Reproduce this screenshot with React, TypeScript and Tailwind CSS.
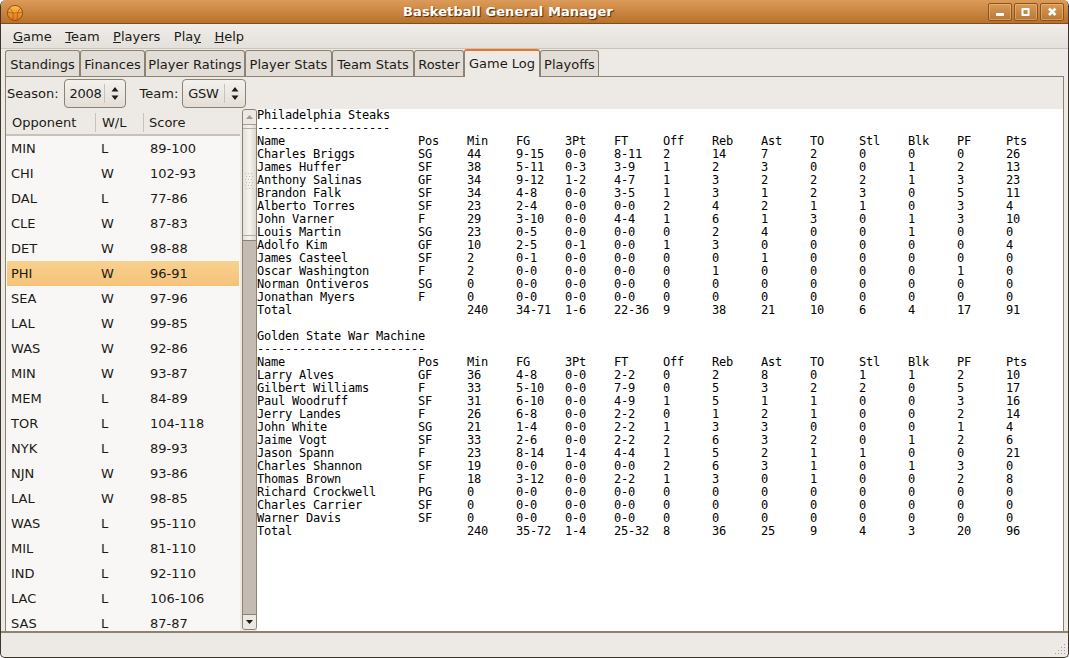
const menus = [
  { pre: "", u: "G", post: "ame" },
  { pre: "", u: "T", post: "eam" },
  { pre: "", u: "P", post: "layers" },
  { pre: "Pla", u: "y", post: "" },
  { pre: "", u: "H", post: "elp" },
];

const tabs = [
  { label: "Standings", w: "w-[75px]" },
  { label: "Finances", w: "w-[65px]" },
  { label: "Player Ratings", w: "w-[100px]" },
  { label: "Player Stats", w: "w-[87px]" },
  { label: "Team Stats", w: "w-[82px]" },
  { label: "Roster", w: "w-[50px]" },
  { label: "Game Log", w: "w-[76px]", active: true },
  { label: "Playoffs", w: "w-[59px]" },
];

const games = [
  ["MIN", "L", "89-100"],
  ["CHI", "W", "102-93"],
  ["DAL", "L", "77-86"],
  ["CLE", "W", "87-83"],
  ["DET", "W", "98-88"],
  ["PHI", "W", "96-91"],
  ["SEA", "W", "97-96"],
  ["LAL", "W", "99-85"],
  ["WAS", "W", "92-86"],
  ["MIN", "W", "93-87"],
  ["MEM", "L", "84-89"],
  ["TOR", "L", "104-118"],
  ["NYK", "L", "89-93"],
  ["NJN", "W", "93-86"],
  ["LAL", "W", "98-85"],
  ["WAS", "L", "95-110"],
  ["MIL", "L", "81-110"],
  ["IND", "L", "92-110"],
  ["LAC", "L", "106-106"],
  ["SAS", "L", "87-87"],
];

const boxHeader = "Name Pos Min FG 3Pt FT Off Reb Ast TO Stl Blk PF Pts";

const phi = [
  "Charles Briggs|SG 44 9-15 0-0 8-11 2 14 7 2 0 0 0 26",
  "James Huffer|SF 38 5-11 0-3 3-9 1 2 3 0 0 1 2 13",
  "Anthony Salinas|GF 34 9-12 1-2 4-7 1 3 2 2 2 1 3 23",
  "Brandon Falk|SF 34 4-8 0-0 3-5 1 3 1 2 3 0 5 11",
  "Alberto Torres|SF 23 2-4 0-0 0-0 2 4 2 1 1 0 3 4",
  "John Varner|F 29 3-10 0-0 4-4 1 6 1 3 0 1 3 10",
  "Louis Martin|SG 23 0-5 0-0 0-0 0 2 4 0 0 1 0 0",
  "Adolfo Kim|GF 10 2-5 0-1 0-0 1 3 0 0 0 0 0 4",
  "James Casteel|SF 2 0-1 0-0 0-0 0 0 1 0 0 0 0 0",
  "Oscar Washington|F 2 0-0 0-0 0-0 0 1 0 0 0 0 1 0",
  "Norman Ontiveros|SG 0 0-0 0-0 0-0 0 0 0 0 0 0 0 0",
  "Jonathan Myers|F 0 0-0 0-0 0-0 0 0 0 0 0 0 0 0",
  "Total| 240 34-71 1-6 22-36 9 38 21 10 6 4 17 91",
];

const gsw = [
  "Larry Alves|GF 36 4-8 0-0 2-2 0 2 8 0 1 1 2 10",
  "Gilbert Williams|F 33 5-10 0-0 7-9 0 5 3 2 2 0 5 17",
  "Paul Woodruff|SF 31 6-10 0-0 4-9 1 5 1 1 0 0 3 16",
  "Jerry Landes|F 26 6-8 0-0 2-2 0 1 2 1 0 0 2 14",
  "John White|SG 21 1-4 0-0 2-2 1 3 3 0 0 0 1 4",
  "Jaime Vogt|SF 33 2-6 0-0 2-2 2 6 3 2 0 1 2 6",
  "Jason Spann|F 23 8-14 1-4 4-4 1 5 2 1 1 0 0 21",
  "Charles Shannon|SF 19 0-0 0-0 0-0 2 6 3 1 0 1 3 0",
  "Thomas Brown|F 18 3-12 0-0 2-2 1 3 0 1 0 0 2 8",
  "Richard Crockwell|PG 0 0-0 0-0 0-0 0 0 0 0 0 0 0 0",
  "Charles Carrier|SF 0 0-0 0-0 0-0 0 0 0 0 0 0 0 0",
  "Warner Davis|SF 0 0-0 0-0 0-0 0 0 0 0 0 0 0 0",
  "Total| 240 35-72 1-4 25-32 8 36 25 9 4 3 20 96",
];

// name column is 23 chars, the rest 7 chars each
function fmtCells(cells: string[]) {
  return cells.map((c, i) => c.padEnd(i === 0 ? 23 : 7)).join("").trimEnd();
}

function fmtRow(row: string) {
  const [name, rest] = row.split("|");
  if (rest.startsWith(" ")) {
    return fmtCells([name, "", ...rest.trim().split(" ")]);
  }
  return fmtCells([name, ...rest.split(" ")]);
}

function boxScore(team: string, rows: string[]) {
  return [team, "-".repeat(team.length), fmtCells(boxHeader.split(" ")), ...rows.map(fmtRow)].join("\n");
}

const report = boxScore("Philadelphia Steaks", phi) + "\n\n" + boxScore("Golden State War Machine", gsw);

function Spinner({ value, w }: { value: string; w: string }) {
  return (
    <div className={`${w} h-[29px] shrink-0 flex items-center rounded-[4px] border border-[#8c8274] bg-gradient-to-b from-[#f4f1ee] to-[#e3ded7] pl-[5px] pr-[6px]`}>
      <span className="flex-1 text-[#1c1a17] tracking-[-0.3px]">{value}</span>
      <span className="w-px h-[19px] shrink-0 bg-[#c9c2b8] mr-[6px]" />
      <svg width="8" height="15" viewBox="0 0 8 15" className="shrink-0">
        <path d="M4 1 L7.5 5.5 H0.5 Z M4 14 L7.5 9.5 H0.5 Z" fill="#1f1d1a" />
      </svg>
    </div>
  );
}

function WinButton({ kind }: { kind: "min" | "max" | "close" }) {
  return (
    <div className="w-[24px] h-[18px] rounded-[2px] border border-[#8d531c] bg-gradient-to-b from-[#d99a58] to-[#bb7733] flex items-center justify-center shadow-[inset_0_0_0_1px_rgba(255,220,170,0.35)]">
      <svg width="14" height="14" viewBox="0 0 14 14">
        {kind === "min" && <rect x="3" y="8" width="8" height="3" fill="#fff" />}
        {kind === "max" && <rect x="3.5" y="4" width="6" height="6" fill="none" stroke="#fff" strokeWidth="2" />}
        {kind === "close" && <path d="M4 3.5 L10.5 10 M10.5 3.5 L4 10" stroke="#fff" strokeWidth="2.6" />}
      </svg>
    </div>
  );
}

function Ball() {
  return (
    <svg width="18" height="18" viewBox="0 0 18 18" className="mt-[2px] shrink-0">
      <defs>
        <linearGradient id="ball" x1="0" y1="0" x2="0" y2="1">
          <stop offset="0" stopColor="#fbc04e" />
          <stop offset="1" stopColor="#e66f14" />
        </linearGradient>
      </defs>
      <circle cx="9" cy="9" r="7.6" fill="url(#ball)" stroke="#8a4f14" strokeWidth="0.9" />
      <path d="M1.6 8 C6 9.5 12 9.5 16.4 8 M3 4 C7 6.5 8 11 6.5 16 M15 4 C12 6 10.5 11 11.5 16" fill="none" stroke="#9c5512" strokeWidth="0.7" />
    </svg>
  );
}

export default function App() {
  return (
    <div className="w-[1069px] h-[658px] overflow-hidden bg-white font-['DejaVu_Sans',sans-serif] text-[13px] text-[#1c1a17]">
      <div className="h-full flex flex-col rounded-t-[6px] rounded-b-[5px] border-x border-b border-[#3c3529] bg-[#edeae5] overflow-hidden">
        {/* Title bar */}
        <div className="h-[24px] shrink-0 flex items-center bg-gradient-to-b from-[#dc9b59] to-[#b97229] border-b border-[#7b4f22] pl-[5px] pr-[4px]">
          <Ball />
          <div className="flex-1 text-center font-bold tracking-[0.1px] text-white [text-shadow:1px_1px_1px_#4a2c0c] pl-[4px]">
            Basketball General Manager
          </div>
          <div className="flex gap-[2px] mt-[1px]">
            <WinButton kind="min" />
            <WinButton kind="max" />
            <WinButton kind="close" />
          </div>
        </div>

        {/* Menu bar */}
        <div className="h-[25px] shrink-0 flex items-center gap-[13.5px] px-[12px] pt-[1px] bg-gradient-to-b from-[#f0edea] to-[#e4e0da] border-b border-[#cdc4b9]">
          {menus.map((m) => (
            <span key={m.u}>
              {m.pre}
              <span className="underline">{m.u}</span>
              {m.post}
            </span>
          ))}
        </div>

        {/* Tabs */}
        <div className="h-[27px] shrink-0 flex items-end pl-[4px] relative z-10">
          {tabs.map((t) =>
            t.active ? (
              <div
                key={t.label}
                className={`${t.w} h-[28px] -mb-px flex items-center justify-center rounded-t-[3px] border-x border-[#8c8274] border-t-2 border-t-[#e8742a] bg-[#edeae5]`}
              >
                {t.label}
              </div>
            ) : (
              <div
                key={t.label}
                className={`${t.w} h-[26px] pt-[2px] flex items-center justify-center rounded-t-[3px] border border-b-0 border-[#8c8274] bg-[#e2ddd6]`}
              >
                {t.label}
              </div>
            ),
          )}
        </div>

        {/* Notebook page */}
        <div className="flex-1 min-h-0 mx-[4px] flex flex-col border border-[#8c8274] border-b-0">
          <div className="h-[32px] shrink-0 flex items-start pt-[2px] pl-[1px]">
            <span className="mr-[5px] leading-[29px]">Season:</span>
            <Spinner value="2008" w="w-[62px]" />
            <span className="ml-[14px] mr-[4px] leading-[29px]">Team:</span>
            <Spinner value="GSW" w="w-[64px]" />
          </div>
          <div className="flex-1 min-h-0 flex">
            {/* Game list */}
            <div className="w-[234px] shrink-0 flex flex-col bg-[#f9f7f5] overflow-hidden">
              <div className="h-[27px] shrink-0 pt-[2px] flex items-center bg-[#edeae5] border-b-2 border-[#c9c2b8]">
                <div className="w-[90px] pl-[6px] border-r border-[#c9c2b8]">Opponent</div>
                <div className="w-[48px] pl-[6px] border-r border-[#c9c2b8]">W/L</div>
                <div className="pl-[5px]">Score</div>
              </div>
              <div className="flex-1 min-h-0 overflow-hidden">
                {games.map((g, i) => (
                  <div
                    key={i}
                    className={`h-[25px] mx-[1px] flex items-center ${i === 5 ? "bg-gradient-to-b from-[#f8d18e] to-[#f4c27a]" : ""}`}
                  >
                    <span className="w-[89px] pl-[4px]">{g[0]}</span>
                    <span className="w-[49px] pl-[5px]">{g[1]}</span>
                    <span className="pl-[5px]">{g[2]}</span>
                  </div>
                ))}
              </div>
            </div>

            {/* Scrollbar */}
            <div className="w-[15px] shrink-0 ml-[2px] mb-[1px] flex flex-col rounded-[3px] bg-[#c4bcb2] border border-[#8c8274] overflow-hidden">
              <div className="h-[15px] shrink-0 flex items-center justify-center bg-[#ece8e3] border-b border-[#a89f92]">
                <svg width="7" height="4" viewBox="0 0 7 4"><path d="M3.5 0 L7 4 H0 Z" fill="#a39a8d" /></svg>
              </div>
              <div className="h-[116px] shrink-0 flex flex-col bg-gradient-to-r from-[#e4e0da] via-[#f6f4f1] to-[#dcd7cf] border-b border-[#8c8274]">
                <div className="h-[4px] shrink-0 border-b border-[#b5ad9f]" />
                <div className="flex-1 flex items-center justify-center">
                  <svg width="9" height="18" viewBox="0 0 9 18">
                    <path d="M0 0h1v1H0zM3 0h1v1H3zM6 0h1v1H6zM1 3h1v1H1zM4 3h1v1H4zM7 3h1v1H7zM0 6h1v1H0zM3 6h1v1H3zM6 6h1v1H6zM1 9h1v1H1zM4 9h1v1H4zM7 9h1v1H7zM0 12h1v1H0zM3 12h1v1H3zM6 12h1v1H6zM1 15h1v1H1zM4 15h1v1H4zM7 15h1v1H7z" fill="#c3bbaf" />
                  </svg>
                </div>
                <div className="h-[5px] shrink-0 border-t border-[#b5ad9f]" />
              </div>
              <div className="flex-1" />
              <div className="h-[15px] shrink-0 flex items-center justify-center bg-[#ece8e3] border-t border-[#8c8274]">
                <svg width="7" height="4" viewBox="0 0 7 4"><path d="M0 0 H7 L3.5 4 Z" fill="#1f1d1a" /></svg>
              </div>
            </div>

            {/* Box score text */}
            <div className="flex-1 min-w-0 bg-white overflow-hidden">
              <pre className="font-['DejaVu_Sans_Mono',monospace] text-[12px] tracking-[-0.224px] leading-[13px] text-black">
                {report}
              </pre>
            </div>
          </div>
        </div>

        {/* Status bar */}
        <div className="h-[26px] shrink-0 border-t-2 border-t-[#8c8274] relative">
          <svg width="13" height="13" viewBox="0 0 13 13" className="absolute right-[2px] bottom-[1px]">
            <path d="M11 1h1v1h-1zM11 4h1v1h-1zM8 4h1v1h-1zM11 7h1v1h-1zM8 7h1v1h-1zM5 7h1v1h-1zM11 10h1v1h-1zM8 10h1v1h-1zM5 10h1v1h-1zM2 10h1v1h-1z" fill="#a8a093" />
          </svg>
        </div>
      </div>
    </div>
  );
}
